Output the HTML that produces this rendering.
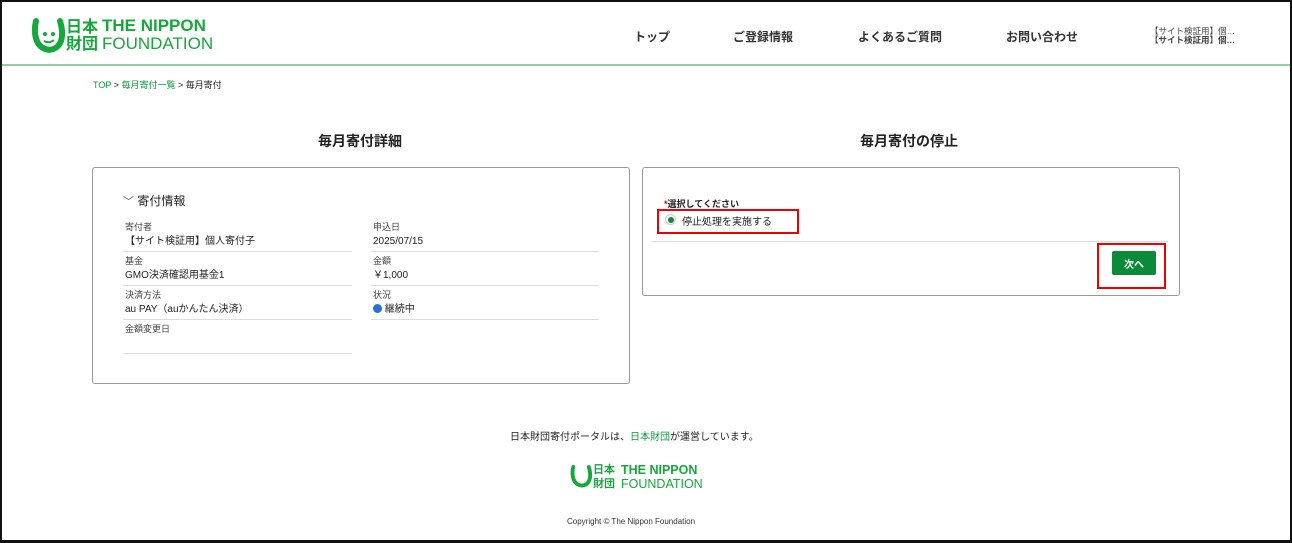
<!DOCTYPE html>
<html><head><meta charset="utf-8"><style>
*{margin:0;padding:0;box-sizing:border-box}
body{width:1292px;height:543px;background:#fff;font-family:"Liberation Sans","Noto Sans CJK JP",sans-serif;color:#222;position:relative;overflow:hidden}
.frame{position:absolute;left:0;top:0;width:1292px;height:543px;border:2px solid #111;border-bottom-width:3px;pointer-events:none}
.a{position:absolute;white-space:nowrap}
.hdrline{position:absolute;left:2px;right:2px;top:64px;height:2px;background:#8fd19e}
.nav{font-size:12px;font-weight:bold;color:#333;top:28px}
.card{position:absolute;border:1px solid #999;border-radius:3px;background:#fff}
.lbl{font-size:9px;line-height:11px;color:#444}
.val{font-size:10px;line-height:12px;color:#222}
.ln{position:absolute;height:1px;background:#ddd}
.green{color:#0b9a3c}
</style></head><body>
<svg class="a" style="left:31px;top:17px" width="34" height="36" viewBox="0 0 34 36"><path d="M5 4 C3 12 3 26 12 31 C19 35 27 32 30 24 C32 18 31 10 29 4" fill="none" stroke="#16a83c" stroke-width="6" stroke-linecap="round"/><circle cx="14" cy="17" r="2" fill="#16a83c"/><circle cx="22" cy="17" r="2" fill="#16a83c"/><path d="M13 24 Q18 27 23 23" stroke="#16a83c" stroke-width="2" fill="none"/></svg>
<div class="a" style="left:66px;top:17px;font-size:16px;line-height:17px;color:#16a83c;font-family:'Noto Sans CJK JP',sans-serif;font-weight:bold">日本<br>財団</div>
<div class="a" style="left:102px;top:17px;font-size:17px;line-height:18px;color:#16a83c;font-weight:bold">THE NIPPON<br><span style="font-weight:normal">FOUNDATION</span></div>
<div class="a nav" style="left:634px">トップ</div>
<div class="a nav" style="left:733px">ご登録情報</div>
<div class="a nav" style="left:858px">よくあるご質問</div>
<div class="a nav" style="left:1006px">お問い合わせ</div>
<div class="a" style="left:1150px;top:27px;font-size:8.5px;line-height:9px;color:#444">【サイト検証用】個…<br><b>【サイト検証用】個…</b></div>
<div class="hdrline"></div>
<div class="a" style="left:93px;top:78px;font-size:9px"><span class="green">TOP</span> &gt; <span class="green">毎月寄付一覧</span> &gt; 毎月寄付</div>
<div class="a" style="left:318px;top:131px;font-size:14px;font-weight:bold">毎月寄付詳細</div>
<div class="a" style="left:860px;top:131px;font-size:14px;font-weight:bold">毎月寄付の停止</div>
<div class="card" style="left:92px;top:167px;width:538px;height:217px"></div>
<div class="a" style="left:123px;top:192px;font-size:12px"><span style="color:#666;font-size:11px">﹀</span> 寄付情報</div>
<div class="a lbl" style="left:125px;top:222px">寄付者</div><div class="a val" style="left:125px;top:236px">【サイト検証用】個人寄付子</div><div class="ln" style="left:123px;top:251px;width:229px"></div>
<div class="a lbl" style="left:373px;top:222px">申込日</div><div class="a val" style="left:373px;top:236px">2025/07/15</div><div class="ln" style="left:371px;top:251px;width:228px"></div>
<div class="a lbl" style="left:125px;top:256px">基金</div><div class="a val" style="left:125px;top:270px">GMO決済確認用基金1</div><div class="ln" style="left:123px;top:285px;width:229px"></div>
<div class="a lbl" style="left:373px;top:256px">金額</div><div class="a val" style="left:373px;top:270px">￥1,000</div><div class="ln" style="left:371px;top:285px;width:228px"></div>
<div class="a lbl" style="left:125px;top:290px">決済方法</div><div class="a val" style="left:125px;top:304px">au PAY（auかんたん決済）</div><div class="ln" style="left:123px;top:319px;width:229px"></div>
<div class="a lbl" style="left:373px;top:290px">状況</div><div class="a val" style="left:373px;top:304px"><span style="display:inline-block;width:9px;height:9px;border-radius:50%;background:#2a6fd6;vertical-align:-1px"></span> 継続中</div><div class="ln" style="left:371px;top:319px;width:228px"></div>
<div class="a lbl" style="left:125px;top:324px">金額変更日</div><div class="ln" style="left:123px;top:353px;width:229px"></div>
<div class="card" style="left:642px;top:167px;width:538px;height:129px"></div>
<div class="a" style="left:664px;top:197px;font-size:9px;font-weight:bold"><span style="color:#d00">*</span>選択してください</div>
<div class="a" style="left:657px;top:209px;width:142px;height:25px;border:2px solid #e00"></div>
<div class="a" style="left:665px;top:214px;width:11px;height:11px;border:1px solid #ccc;border-radius:50%;background:#fff;display:flex;align-items:center;justify-content:center"><div style="width:6px;height:6px;border-radius:50%;background:#0b8a3a"></div></div>
<div class="a" style="left:682px;top:213px;font-size:10px">停止処理を実施する</div>
<div class="ln" style="left:651px;top:241px;width:517px"></div>
<div class="a" style="left:1097px;top:243px;width:69px;height:46px;border:2px solid #e00"></div>
<div class="a" style="left:1112px;top:251px;width:44px;height:24px;background:#0b8a3a;border-radius:2px;color:#fff;font-size:10px;font-weight:bold;display:flex;align-items:center;justify-content:center">次へ</div>
<div class="a" style="left:510px;top:428px;font-size:10px">日本財団寄付ポータルは、<span class="green">日本財団</span>が運営しています。</div>
<svg class="a" style="left:570px;top:463px" width="22" height="26" viewBox="0 0 34 36"><path d="M5 4 C3 12 3 26 12 31 C19 35 27 32 30 24 C32 18 31 10 29 4" fill="none" stroke="#16a83c" stroke-width="6" stroke-linecap="round"/></svg>
<div class="a" style="left:593px;top:463px;font-size:11px;line-height:14px;color:#16a83c;font-weight:bold">日本<br>財団</div>
<div class="a" style="left:621px;top:463px;font-size:12.5px;line-height:14px;color:#16a83c;font-weight:bold">THE NIPPON<br><span style="font-weight:normal">FOUNDATION</span></div>
<div class="a" style="left:567px;top:517px;font-size:8px;color:#333">Copyright © The Nippon Foundation</div>
<div class="frame"></div>
</body></html>
